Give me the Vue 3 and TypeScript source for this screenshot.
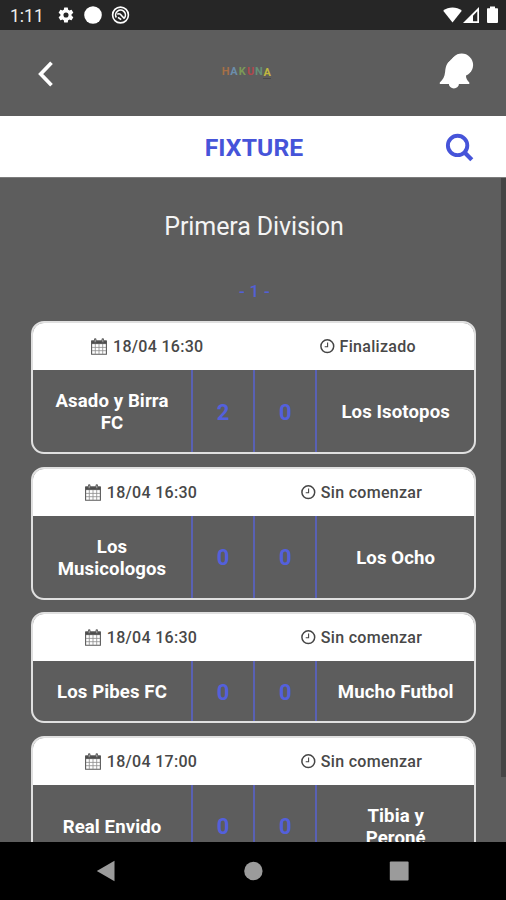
<script setup lang="ts">
interface Match {
  date: string
  status: string
  home: string
  away: string
  homeGoals: number
  awayGoals: number
}

const matches: Match[] = [
  { date: '18/04 16:30', status: 'Finalizado', home: 'Asado y Birra FC', away: 'Los Isotopos', homeGoals: 2, awayGoals: 0 },
  { date: '18/04 16:30', status: 'Sin comenzar', home: 'Los Musicologos', away: 'Los Ocho', homeGoals: 0, awayGoals: 0 },
  { date: '18/04 16:30', status: 'Sin comenzar', home: 'Los Pibes FC', away: 'Mucho Futbol', homeGoals: 0, awayGoals: 0 },
  { date: '18/04 17:00', status: 'Sin comenzar', home: 'Real Envido', away: 'Tibia y Peroné', homeGoals: 0, awayGoals: 0 },
]

const brand = [
  { letter: 'H', tone: 'orange' },
  { letter: 'A', tone: 'blue' },
  { letter: 'K', tone: 'green' },
  { letter: 'U', tone: 'red' },
  { letter: 'N', tone: 'teal' },
  { letter: 'A', tone: 'yellow' },
]
</script>

<template>
  <div class="screen">
    <div class="status">
      <span class="clock">1:11</span>
      <svg class="gear" width="18" height="18" viewBox="0 0 24 24"><path fill="#fff" fill-rule="evenodd" d="M19.4 13c.04-.3.06-.65.06-1s-.02-.7-.07-1l2.1-1.65a.5.5 0 0 0 .12-.64l-2-3.46a.5.5 0 0 0-.6-.22l-2.5 1a7.300 7.300 0 0 0-1.700-.980l-.370-2.650A.5.5 0 0 0 13.950 2h-4a.5.5 0 0 0-.480.420L9.100 5.050c-.6.240-1.170.580-1.700.980l-2.500-1a.5.5 0 0 0-.600.220l-2 3.460a.5.5 0 0 0 .120.640L4.540 11a7.900 7.900 0 0 0 0 2l-2.120 1.650a.5.5 0 0 0-.120.640l2 3.460c.120.220.380.300.600.220l2.500-1c.530.400 1.100.740 1.700.980l.370 2.650c.040.240.240.400.480.400h4c.240 0 .450-.160.480-.400l.370-2.650c.600-.240 1.170-.580 1.700-.980l2.500 1c.220.080.480 0 .600-.220l2-3.460a.5.5 0 0 0-.120-.640zM12 15.400a3.400 3.400 0 1 1 0-6.800 3.400 3.400 0 0 1 0 6.800z" /></svg>
      <svg class="disc" width="18" height="18" viewBox="0 0 18 18"><circle cx="9" cy="9" r="8.800" fill="#fff" /></svg>
      <svg class="cast" width="19" height="18" viewBox="0 0 19 18" fill="none" stroke="#fff"><circle cx="9.500" cy="9" r="7.900" stroke-width="1.600" /><path stroke-width="1.600" d="M5.300 11.500A4.900 4.900 0 1 1 13.200 12.200M6.300 8.200c1.800-1 3.200-.2 4.200 1.300l3 3.300M7 11.300l3.200 2.400" /></svg>
      <span class="grow"></span>
      <svg class="signals" width="56" height="18" viewBox="0 0 56 18" fill="#fff"><path d="M.2 4.800C5.600.4 13.500.4 18.800 4.800L9.500 16.600z" /><path fill-rule="evenodd" d="M36 1v16H20zM34.300 5.300 30 9.800v5.500h4.300z" /><path d="M47 .5h5v1.800h2.300q.7 0 .7.700v13q0 1-1 1h-9q-1 0-1-1V3q0-.7.700-.7H47z" /></svg>
    </div>

    <div class="topbar">
      <svg class="back" width="20" height="28" viewBox="0 0 20 28"><path d="M15.500 2.800 4.700 14l10.800 11.200" fill="none" stroke="#fff" stroke-width="3.700" /></svg>
      <div class="brand"><span v-for="(b, i) in brand" :key="i" :class="b.tone">{{ b.letter }}</span></div>
      <svg class="bell" width="36" height="38" viewBox="0 0 36 38" fill="#fff"><path d="M.8 31v-1.600c3.200-2.700 4.800-5.800 5.300-10.400.6-6.500 2.300-11.300 8.500-12.300L27 22c-.2 3.200 1 5.100 3.300 7.400V31zM9.800 30.500h10.200a5.100 5.100 0 0 1-10.200 0z" /><path d="M9.500 9.500Q14 3.500 20 1.500l8 20-8 1z" /><circle cx="22.700" cy="12" r="11.400" /></svg>
    </div>

    <div class="titlebar">
      <h1>FIXTURE</h1>
      <svg class="search" width="30" height="30" viewBox="0 0 30 30" fill="none" stroke="#4654d9"><circle cx="12.600" cy="12.400" r="9.700" stroke-width="3.900" /><path d="m19.600 19.500 7.200 7.200" stroke-width="4.300" /></svg>
    </div>

    <div class="content">
      <div class="scrollbar"></div>
      <h2>Primera Division</h2>
      <p class="round">- 1 -</p>
      <div class="list">
        <article v-for="(m, i) in matches" :key="i" class="card">
          <header>
            <div class="info">
              <svg class="cal" width="16" height="17" viewBox="0 0 16 17" fill="none" stroke="#5a5a5a"><path d="M.6 3h14.800v13.200H.6z" stroke-width="1.100" /><path d="M.6 3h14.800v2.600H.6z" fill="#4b4b4b" /><path d="M4.300 6v10M8 6v10M11.700 6v10M1 9.400h14M1 12.700h14" stroke="#8c8c8c" stroke-width=".8" /><path d="M4.200 1.500v2.700M11.800 1.500v2.700" stroke-width="2.500" stroke-linecap="round" /><path d="M4.200 1.600v2.200M11.800 1.600v2.200" stroke="#ccc" stroke-width=".8" /></svg>
              <span class="date">{{ m.date }}</span>
            </div>
            <div class="info">
              <svg class="watch" width="15" height="15" viewBox="0 0 15 15" fill="none" stroke="#464646"><circle cx="7.300" cy="7.200" r="6.400" stroke-width="1.500" /><path d="M7.600 3.600v4.100H4.700" stroke-width="1.100" /></svg>
              <span class="state">{{ m.status }}</span>
            </div>
          </header>
          <div class="teams">
            <div class="team">{{ m.home }}</div>
            <div class="goals">{{ m.homeGoals }}</div>
            <div class="goals">{{ m.awayGoals }}</div>
            <div class="team away">{{ m.away }}</div>
          </div>
        </article>
      </div>
    </div>

    <nav class="navbar">
      <svg width="20" height="22" viewBox="0 0 20 22" fill="#9b9b9b"><path d="M18.500.8v20.400L.8 11z" /></svg>
      <svg width="20" height="22" viewBox="0 0 20 22" fill="#9b9b9b"><circle cx="10.400" cy="11" r="9.200" /></svg>
      <svg width="20" height="22" viewBox="0 0 20 22" fill="#9b9b9b"><rect x=".8" y="1.500" width="18.800" height="19" rx="1" /></svg>
    </nav>
  </div>
</template>

<style>
body {
  margin: 0;
}
</style>

<style scoped>
.screen {
  width: 506px;
  height: 900px;
  display: flex;
  flex-direction: column;
  overflow: hidden;
  background: #5d5d5d;
  font-family: Roboto, sans-serif;
}
.screen svg {
  display: block;
  flex: none;
}
.status {
  height: 30px;
  flex: none;
  display: flex;
  align-items: center;
  background: #262626;
  color: #eee;
  padding: 0 7px 0 10px;
}
.clock {
  width: 47px;
  font-size: 17.500px;
  line-height: 30px;
  padding-top: 2px;
}
.disc {
  margin-left: 9px;
}
.cast {
  margin-left: 9px;
}
.grow {
  flex: 1;
}
.topbar {
  height: 86px;
  flex: none;
  display: flex;
  align-items: center;
  box-sizing: border-box;
  padding: 0 31px 0 36px;
}
.back {
  margin-top: 2px;
}
.brand {
  display: grid;
  grid-template-columns: repeat(6, 8.300px);
  margin: -1px auto 0 165.500px;
  font-size: 11px;
  line-height: 12px;
  font-weight: 700;
  text-align: center;
}
.orange { color: #a67047; }
.blue { color: #6c8eab; }
.green { color: #7c9957; }
.red { color: #b0484e; }
.teal { color: #669078; }
.yellow {
  color: #c1b83f;
  border-bottom: 1px solid #4a4a4a;
  line-height: 11px;
  padding-top: 0.500px;
}
.bell {
  margin-top: -2px;
}
.titlebar {
  height: 62px;
  flex: none;
  display: grid;
  grid-template-columns: 1fr auto 1fr;
  align-items: center;
  background: #fff;
  box-sizing: border-box;
  border-bottom: 1px solid #7c7c7c;
  padding: 0 31px;
}
h1 {
  grid-column: 2;
  margin: 3px 0 0 2px;
  font-size: 24.700px;
  line-height: 28px;
  font-weight: 700;
  letter-spacing: 0.100px;
  color: #4654d9;
}
.search {
  justify-self: end;
  margin-top: 2px;
}
.content {
  flex: 1;
  min-height: 0;
  overflow: hidden;
  position: relative;
  text-align: center;
}
.scrollbar {
  position: absolute;
  right: 0;
  top: 0;
  width: 5px;
  height: 599px;
  background: #454545;
}
h2 {
  margin: 34px 0 0;
  padding-left: 2px;
  font-size: 25px;
  line-height: 30px;
  font-weight: 400;
  letter-spacing: -0.100px;
  color: #f4f4f4;
}
.round {
  margin: 39px 0 0;
  padding-left: 3px;
  font-size: 17px;
  line-height: 20px;
  font-weight: 500;
  color: #5360d6;
  letter-spacing: 0.300px;
}
.list {
  display: flex;
  flex-direction: column;
  gap: 12.500px;
  padding: 20.100px 30px 0 31px;
}
.card {
  border: 2px solid #e0e0e0;
  border-radius: 13px;
  overflow: hidden;
  flex: none;
}
header {
  height: 47px;
  display: flex;
  align-items: center;
  justify-content: space-around;
  background: #fff;
  color: #484848;
  font-size: 16px;
  font-weight: 500;
}
.info {
  display: flex;
  align-items: center;
}
.cal {
  margin-right: 6px;
}
.watch {
  margin-right: 5px;
}
.info span {
  line-height: 20px;
  padding-top: 1px;
  letter-spacing: 0.300px;
}
.teams {
  display: grid;
  grid-template-columns: 158px 62.200px 62.200px 1fr;
}
.team {
  display: flex;
  align-items: center;
  justify-content: center;
  padding: 20px 19px 18px;
  line-height: 22px;
  font-size: 18.600px;
  font-weight: 700;
  letter-spacing: 0.100px;
  color: #fff;
}
.goals {
  display: flex;
  align-items: center;
  justify-content: center;
  border-left: 2px solid #5961b4;
  font-size: 22px;
  font-weight: 700;
  color: #5360dc;
  padding-top: 2px;
}
.away {
  border-left: 2px solid #5961b4;
}
.navbar {
  height: 58px;
  flex: none;
  display: flex;
  align-items: center;
  justify-content: space-between;
  background: #000;
  padding: 0 97px 0 96px;
}
</style>
